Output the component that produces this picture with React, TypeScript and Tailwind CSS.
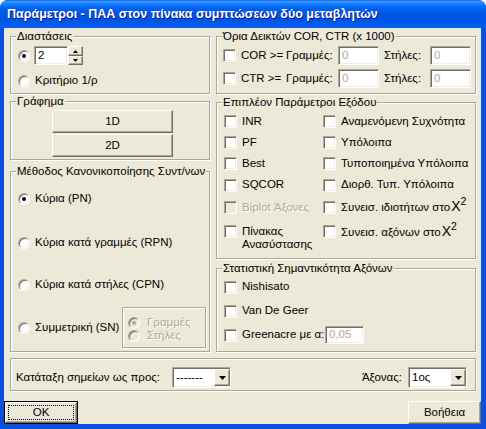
import React from "react";

const SUNKEN =
  "border border-t-[#ACA899] border-l-[#ACA899] border-b-white border-r-white shadow-[inset_1px_1px_0_#716F64,inset_-1px_-1px_0_#F1EFE2]";
const RAISED =
  "border border-t-white border-l-white border-b-[#716F64] border-r-[#716F64] shadow-[inset_-1px_-1px_0_#ACA899] bg-[#ECE9D8]";

function Group({
  label,
  className = "",
  children,
}: {
  label?: string;
  className?: string;
  children?: React.ReactNode;
}) {
  return (
    <div
      className={`relative border border-[#ACA899] shadow-[inset_1px_1px_0_#FFFFFF,1px_1px_0_#FFFFFF] ${className}`}
    >
      {label && (
        <span className="absolute left-[5px] top-[-7px] px-[1px] bg-[#ECE9D8] leading-[13px] whitespace-nowrap">
          {label}
        </span>
      )}
      {children}
    </div>
  );
}

function Radio({ checked, disabled }: { checked?: boolean; disabled?: boolean }) {
  return (
    <span
      className={`relative inline-block w-[12px] h-[12px] shrink-0 rounded-full ${SUNKEN} ${
        disabled ? "bg-[#ECE9D8]" : "bg-white"
      }`}
    >
      {checked && (
        <span
          className={`absolute left-[3px] top-[3px] w-[4px] h-[4px] rounded-full ${
            disabled ? "bg-[#ACA899]" : "bg-black"
          }`}
        />
      )}
    </span>
  );
}

function Check({ disabled }: { disabled?: boolean }) {
  return (
    <span
      className={`inline-block w-[13px] h-[13px] shrink-0 ${SUNKEN} ${
        disabled ? "bg-[#ECE9D8]" : "bg-white"
      }`}
    />
  );
}

function Dis({ children }: { children: React.ReactNode }) {
  return (
    <span className="text-[#ACA899] [text-shadow:1px_1px_0_#FFFFFF] whitespace-nowrap">
      {children}
    </span>
  );
}

function TextBox({
  value,
  w,
  h = "h-[19px]",
  gray,
}: {
  value: string;
  w: string;
  h?: string;
  gray?: boolean;
}) {
  return (
    <div
      className={`${w} ${h} shrink-0 bg-white ${SUNKEN} flex items-center pl-[3px] ${
        gray ? "text-[#ACA899]" : "text-black"
      }`}
    >
      {value}
    </div>
  );
}

function DownTri() {
  return (
    <svg width="7" height="4" viewBox="0 0 7 4">
      <path d="M0 0H7L3.5 4Z" fill="#000" />
    </svg>
  );
}

function Select({ value, w }: { value: string; w: string }) {
  return (
    <div className={`${w} h-[21px] shrink-0 bg-white ${SUNKEN} flex items-center`}>
      <span className="flex-1 pl-[3px] leading-none whitespace-nowrap">{value}</span>
      <div className={`w-[16px] h-[17px] ${RAISED} flex items-center justify-center`}>
        <DownTri />
      </div>
    </div>
  );
}

function X2() {
  return (
    <span className="whitespace-nowrap">
      <span className="text-[14px] leading-[12px] ml-[1px]">X</span>
      <span className="relative top-[-6px] text-[10.5px] leading-none">2</span>
    </span>
  );
}

function CheckRow({
  children,
  disabled,
  className = "",
}: {
  children: React.ReactNode;
  disabled?: boolean;
  className?: string;
}) {
  return (
    <div className={`flex items-center ${className}`}>
      <Check disabled={disabled} />
      <span className="ml-[5px] whitespace-nowrap">{children}</span>
    </div>
  );
}

export default function App() {
  return (
    <div className="w-[486px] h-[429px] flex flex-col bg-[#0A4FE0] rounded-t-[8px] overflow-hidden font-['Liberation_Sans',Arial,sans-serif] text-[11.5px] text-black">
      {/* Title bar */}
      <div className="h-[28px] shrink-0 flex items-center pl-[7px] pt-[1px] bg-[linear-gradient(180deg,#0A5DEB_0%,#3D95FF_5%,#2A8CFF_10%,#137EFF_16%,#0470FC_22%,#0262EE_30%,#0057E5_48%,#0054E3_62%,#0055EB_80%,#005BF5_90%,#0A66F8_96%,#0052E0_100%)] text-white font-bold text-[12.5px] [text-shadow:1px_1px_0_#0A1883] whitespace-nowrap">
        Παράμετροι - ΠΑΑ στον πίνακα συμπτώσεων δύο μεταβλητών
      </div>

      {/* Client area */}
      <div className="flex-1 ml-[4px] mr-[5px] mb-[5px] bg-[#ECE9D8] flex flex-col">
        <div className="pl-[6px] pt-[8px] flex flex-col">
          <div className="flex gap-[6px]">
            {/* Left column */}
            <div className="w-[200px] flex flex-col">
              <Group label="Διαστάσεις" className="h-[58px] pt-[9px] pl-[7px]">
                <div className="flex items-center h-[19px]">
                  <Radio checked />
                  <div className="ml-[4px] flex">
                    <TextBox value="2" w="w-[34px]" />
                    <div className="flex flex-col w-[15px] h-[19px]">
                      <div className={`h-[10px] ${RAISED} flex items-center justify-center`}>
                        <svg width="5" height="3" viewBox="0 0 5 3">
                          <path d="M0 3H5L2.5 0Z" fill="#000" />
                        </svg>
                      </div>
                      <div className={`h-[9px] ${RAISED} flex items-center justify-center`}>
                        <svg width="5" height="3" viewBox="0 0 5 3">
                          <path d="M0 0H5L2.5 3Z" fill="#000" />
                        </svg>
                      </div>
                    </div>
                  </div>
                </div>
                <div className="flex items-center mt-[9px] h-[13px]">
                  <Radio />
                  <span className="ml-[5px] whitespace-nowrap">Κριτήριο 1/ρ</span>
                </div>
              </Group>

              <Group label="Γράφημα" className="mt-[7px] h-[59px] pt-[8px] pl-[41px]">
                <div className={`w-[121px] h-[23px] ${RAISED} flex items-center justify-center`}>1D</div>
                <div className={`mt-[1px] w-[121px] h-[23px] ${RAISED} flex items-center justify-center`}>2D</div>
              </Group>

              <Group
                label="Μέθοδος Κανονικοποίησης Συντ/νων"
                className="mt-[11px] h-[181px] pt-[20px] pl-[7px] pr-[3px]"
              >
                <div className="flex items-center h-[14px]">
                  <Radio checked />
                  <span className="ml-[5px] whitespace-nowrap">Κύρια (PN)</span>
                </div>
                <div className="flex items-center h-[14px] mt-[30px]">
                  <Radio />
                  <span className="ml-[5px] whitespace-nowrap">Κύρια κατά γραμμές (RPN)</span>
                </div>
                <div className="flex items-center h-[14px] mt-[28px]">
                  <Radio />
                  <span className="ml-[5px] whitespace-nowrap">Κύρια κατά στήλες (CPN)</span>
                </div>
                <div className="flex items-center h-[41px] mt-[15px]">
                  <Radio />
                  <span className="ml-[5px] whitespace-nowrap">Συμμετρική (SN)</span>
                  <div className="ml-auto w-[84px] shrink-0 h-[41px] border border-[#ACA899] shadow-[inset_1px_1px_0_#FFFFFF,1px_1px_0_#FFFFFF] pt-[8px] pl-[5px]">
                    <div className="flex items-center h-[13px]">
                      <Radio checked disabled />
                      <span className="ml-[7px] leading-[13px]">
                        <Dis>Γραμμές</Dis>
                      </span>
                    </div>
                    <div className="flex items-center h-[13px]">
                      <Radio disabled />
                      <span className="ml-[7px] leading-[13px]">
                        <Dis>Στήλες</Dis>
                      </span>
                    </div>
                  </div>
                </div>
              </Group>
            </div>

            {/* Right column */}
            <div className="w-[260px] flex flex-col">
              <Group
                label="Όρια Δεικτών COR, CTR (x 1000)"
                className="h-[58px] pt-[9px] pl-[6px]"
              >
                {["COR >=", "CTR >="].map((t, i) => (
                  <div key={t} className={`flex items-center h-[19px] ${i ? "mt-[4px]" : ""}`}>
                    <Check />
                    <span className="ml-[5px] w-[45px] shrink-0 whitespace-nowrap">{t}</span>
                    <span className="w-[52px] shrink-0 whitespace-nowrap">Γραμμές:</span>
                    <TextBox value="0" w="w-[41px]" gray />
                    <span className="ml-[5px] w-[46px] shrink-0 whitespace-nowrap">Στήλες:</span>
                    <TextBox value="0" w="w-[41px]" gray />
                  </div>
                ))}
              </Group>

              <Group
                label="Επιπλέον Παράμετροι Εξόδου"
                className="mt-[8px] h-[157px] pt-[8px] pl-[7px]"
              >
                <div className="grid grid-cols-[99px_1fr] grid-rows-[21px_21px_21px_22px_23px_auto]">
                  <CheckRow>INR</CheckRow>
                  <CheckRow>Αναμενόμενη Συχνότητα</CheckRow>
                  <CheckRow>PF</CheckRow>
                  <CheckRow>Υπόλοιπα</CheckRow>
                  <CheckRow>Best</CheckRow>
                  <CheckRow>Τυποποιημένα Υπόλοιπα</CheckRow>
                  <CheckRow>SQCOR</CheckRow>
                  <CheckRow>Διορθ. Τυπ. Υπόλοιπα</CheckRow>
                  <div className="flex items-center">
                    <Check disabled />
                    <span className="ml-[5px]">
                      <Dis>Biplot Άξονες</Dis>
                    </span>
                  </div>
                  <CheckRow>
                    Συνεισ. ιδιοτήτων στο<X2 />
                  </CheckRow>
                  <div className="flex items-start pt-[6px]">
                    <Check />
                    <span className="ml-[5px] leading-[13px] whitespace-nowrap">
                      Πίνακας
                      <br />
                      Ανασύστασης
                    </span>
                  </div>
                  <div className="flex items-start pt-[6px]">
                    <Check />
                    <span className="ml-[5px] leading-[13px] whitespace-nowrap">
                      Συνεισ. αξόνων στο<X2 />
                    </span>
                  </div>
                </div>
              </Group>

              <Group
                label="Στατιστική Σημαντικότητα Αξόνων"
                className="mt-[9px] h-[84px] pt-[6px] pl-[7px]"
              >
                <CheckRow className="h-[24px]">Nishisato</CheckRow>
                <CheckRow className="h-[24px]">Van De Geer</CheckRow>
                <div className="flex items-center h-[24px]">
                  <Check />
                  <span className="ml-[5px] w-[83px] shrink-0 whitespace-nowrap">Greenacre με α:</span>
                  <TextBox value="0,05" w="w-[39px]" h="h-[18px]" gray />
                </div>
              </Group>
            </div>
          </div>

          {/* Bottom group */}
          <Group className="mt-[6px] w-[466px] h-[33px] pt-[8px] pl-[5px] pr-[8px]">
            <div className="flex items-center h-[21px]">
              <span className="w-[156px] shrink-0 whitespace-nowrap">Κατάταξη σημείων ως προς:</span>
              <Select value="-------" w="w-[59px]" />
              <span className="ml-auto whitespace-nowrap">Άξονας:</span>
              <div className="ml-[6px]">
                <Select value="1ος" w="w-[59px]" />
              </div>
            </div>
          </Group>
        </div>

        {/* Buttons */}
        <div className="mt-[10px] flex justify-between">
          <div className="w-[74px] h-[23px] border border-black p-0">
            <div className={`w-full h-full ${RAISED} p-[2px]`}>
              <div className="w-full h-full border border-dotted border-black flex items-center justify-center">
                OK
              </div>
            </div>
          </div>
          <div className={`w-[73px] h-[23px] ${RAISED} flex items-center justify-center`}>Βοήθεια</div>
        </div>
      </div>
    </div>
  );
}
